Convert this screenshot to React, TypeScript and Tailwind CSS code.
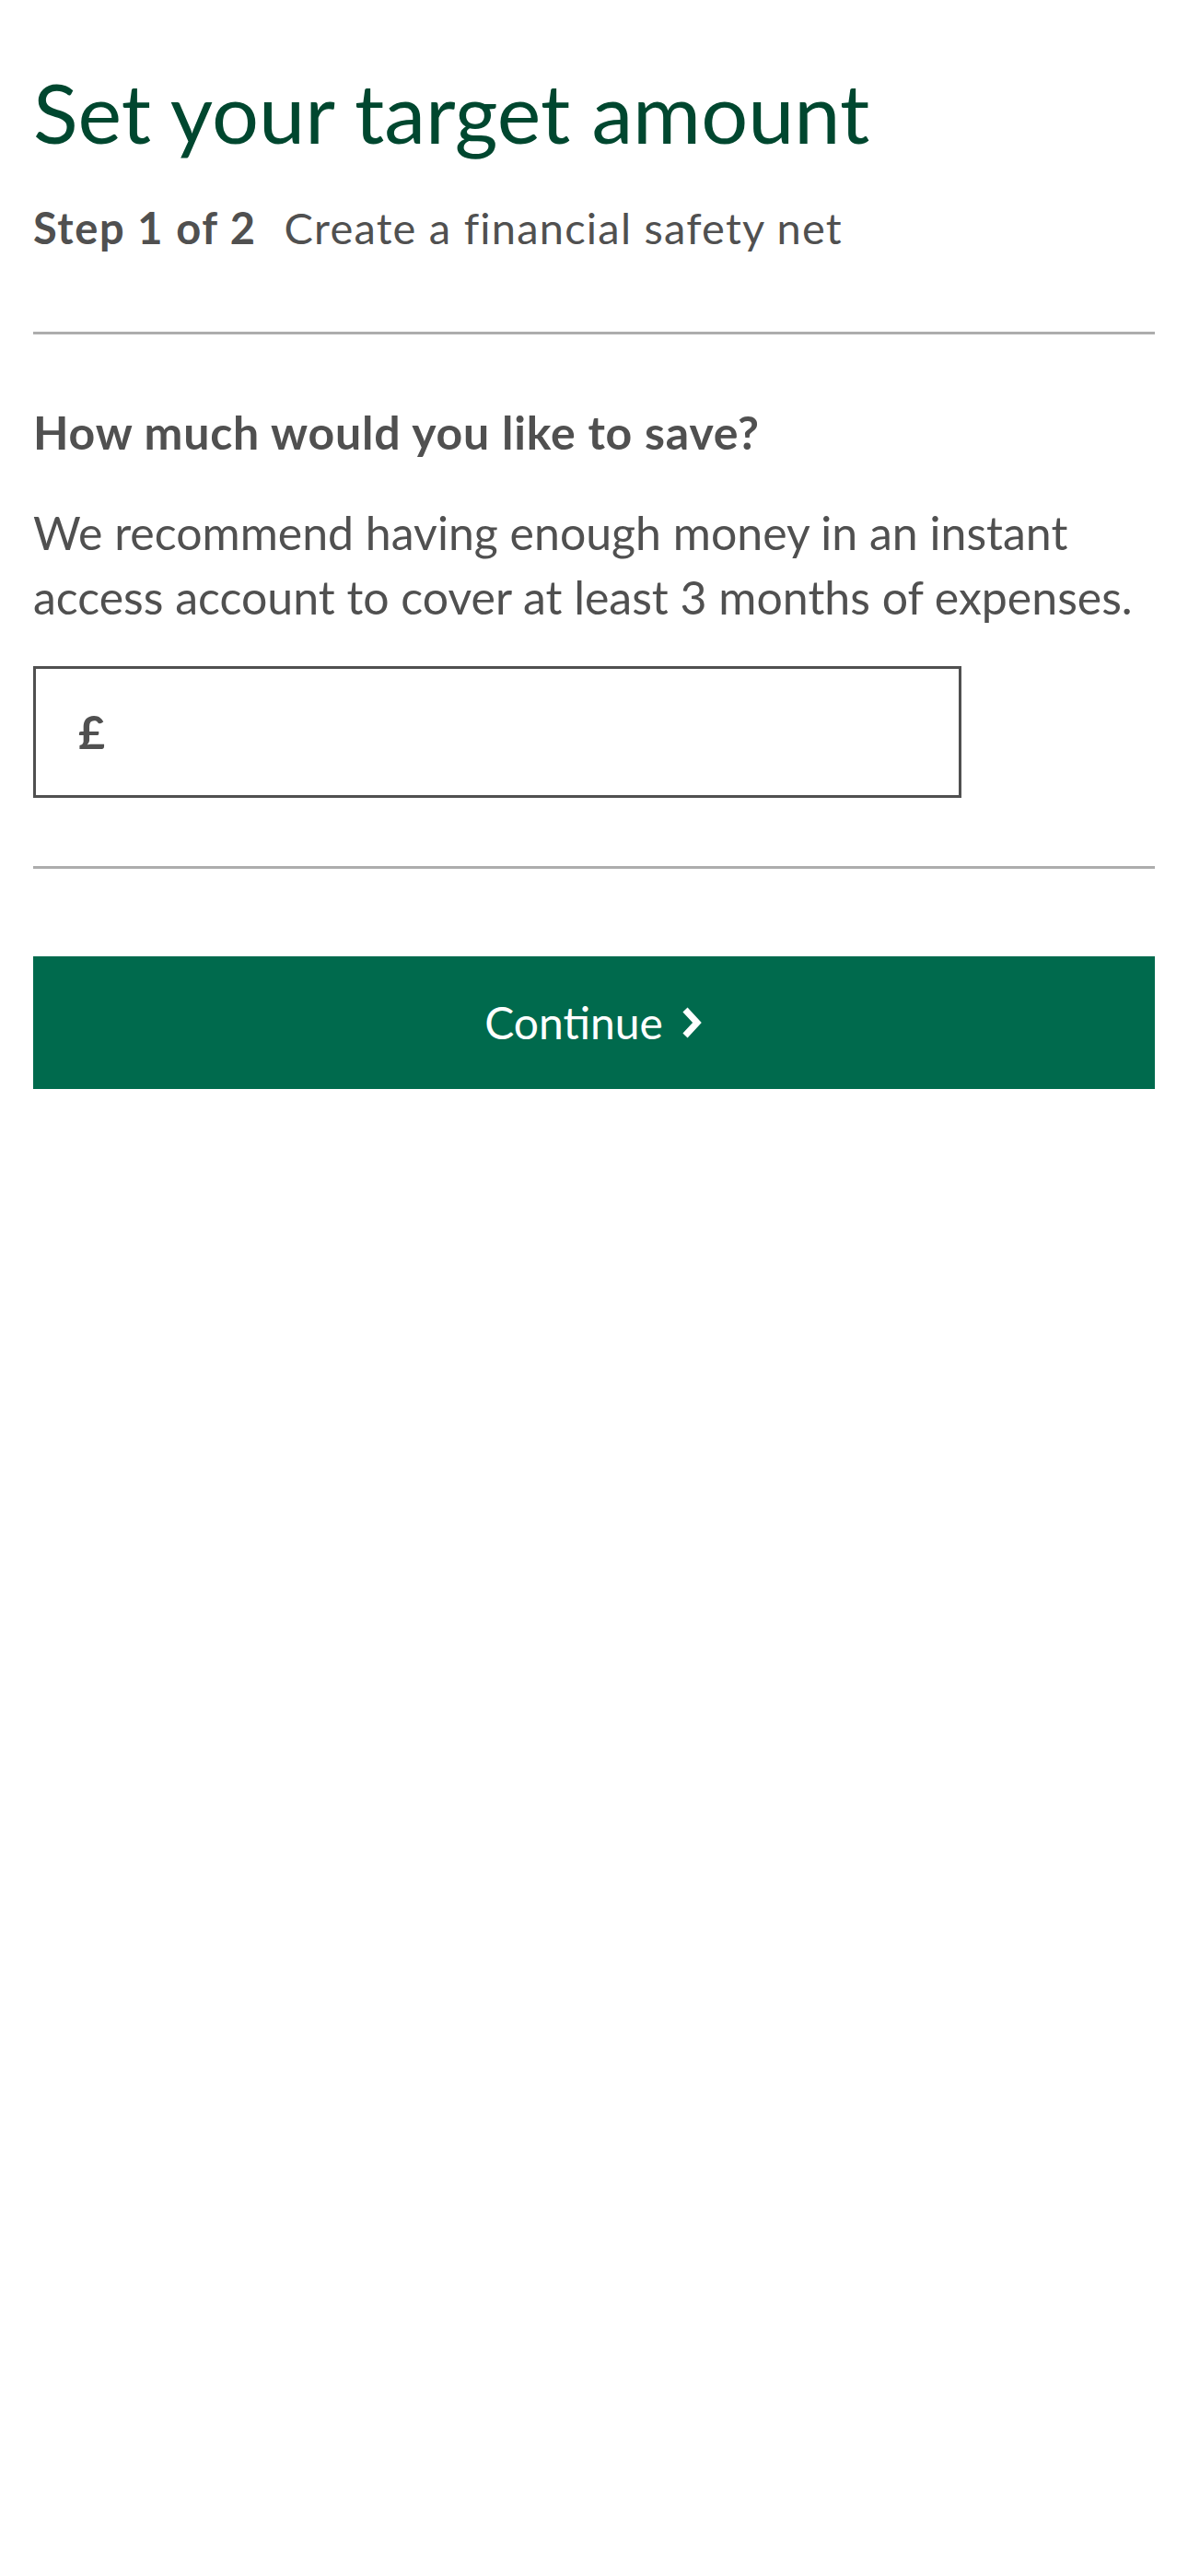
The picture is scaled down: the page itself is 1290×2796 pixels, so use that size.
import { useState } from 'react'

function Chevron() {
  return (
    <svg width="24" height="34" viewBox="0 0 24 34" className="ml-[20px] shrink-0" aria-hidden="true">
      <path d="M4 3 L17 17 L4 31" fill="none" stroke="#ffffff" strokeWidth="7" strokeLinejoin="miter" />
    </svg>
  )
}

export default function App() {
  const [amount, setAmount] = useState('')

  return (
    <div className="min-h-screen bg-white px-[36px] font-['Lato',sans-serif] text-[#505050]">
      <h1 className="pt-[67px] text-[90px] leading-[108px] font-normal text-[#00472f]">
        Set your target amount
      </h1>
      <p className="mt-[44px] text-[47px] leading-[56px] tracking-[1.2px]">
        <span className="font-bold tracking-[1.6px]">Step 1 of 2</span>
        <span className="ml-[30px]">Create a financial safety net</span>
      </p>

      <hr className="mt-[85px] h-[3px] border-0 bg-[#adadad]" />

      <h2 className="mt-[76px] text-[50px] leading-[60px] font-bold tracking-[0.8px]">
        How much would you like to save?
      </h2>
      <p className="mt-[44px] text-[50px] leading-[70px]">
        We recommend having enough money in an instant access account to cover at least 3 months of expenses.
      </p>

      <label className="mt-[40px] flex h-[143px] w-[1008px] items-center border-[3px] border-[#505050] pl-[46px]">
        <span className="text-[50px] font-bold">£</span>
        <input
          type="text"
          inputMode="decimal"
          value={amount}
          onChange={(e) => setAmount(e.target.value)}
          className="ml-[16px] h-full flex-1 bg-transparent text-[48px] outline-none"
        />
      </label>

      <hr className="mt-[74px] h-[3px] border-0 bg-[#adadad]" />

      <button
        type="button"
        className="mt-[95px] flex h-[144px] w-full items-center justify-center bg-[#006a4d] text-[48px] text-white"
      >
        <span>Continue</span>
        <Chevron />
      </button>
    </div>
  )
}
